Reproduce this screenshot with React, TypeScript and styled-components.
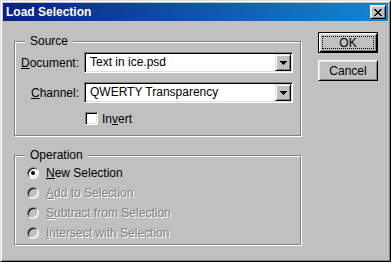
import styled, { createGlobalStyle } from "styled-components"

const GlobalStyle = createGlobalStyle`
  html, body { margin: 0; padding: 0; background: #c0c0c0; }
  body { font-family: "Liberation Sans", Arial, sans-serif; font-size: 12px; color: #000; }
`

const Window = styled.div`
  box-sizing: border-box; width: 391px; height: 262px;
  background: #c0c0c0; padding: 2px;
  border: 1px solid; border-color: #dfdfdf #000 #000 #dfdfdf;
  box-shadow: inset 1px 1px #fff, inset -1px -1px #808080;
  display: flex; flex-direction: column;
`

const TitleBar = styled.div`
  height: 18px; display: flex; align-items: center; justify-content: space-between;
  padding: 0 2px 0 3px;
  background: linear-gradient(90deg, #0a2084, #1288d2);
  color: #fff; font-weight: bold; font-size: 12px;
`

const CloseButton = styled.div`
  box-sizing: border-box; width: 16px; height: 14px;
  background: #c0c0c0; display: flex; align-items: center; justify-content: center;
  border: 1px solid; border-color: #fff #000 #000 #fff;
  box-shadow: inset 1px 1px #dfdfdf, inset -1px -1px #808080;
`

const Body = styled.div`
  display: flex; padding: 11px 0 0 11px;
`

const LeftColumn = styled.div`
  width: 287px; margin-top: 9px;
  display: flex; flex-direction: column; gap: 19px;
`

const Group = styled.div`
  border: 1px solid #808080;
  box-shadow: inset 1px 1px #fff, 1px 1px #fff;
  display: flex; flex-direction: column;
`

const Legend = styled.span`
  align-self: flex-start; margin: -8px 0 0 10px; padding: 0 5px;
  line-height: 14px; background: #c0c0c0;
`

const FormGrid = styled.div`
  display: grid; grid-template-columns: 58px 1fr;
  column-gap: 5px; row-gap: 9px; align-items: center;
  margin-top: 4px; padding: 0 7px 10px 6px;
`

const Label = styled.span`
  justify-self: end; white-space: nowrap;
`

const Combo = styled.div`
  box-sizing: border-box; height: 21px; padding: 1px;
  background: #fff; display: flex;
  border: 1px solid; border-color: #808080 #fff #fff #808080;
  box-shadow: inset 1px 1px #000, inset -1px -1px #dfdfdf;
`

const ComboText = styled.span`
  flex: 1; padding-left: 4px; line-height: 17px; white-space: nowrap;
`

const DropButton = styled.div`
  box-sizing: border-box; width: 16px; background: #c0c0c0;
  display: flex; align-items: center; justify-content: center;
  border: 1px solid; border-color: #dfdfdf #000 #000 #dfdfdf;
  box-shadow: inset 1px 1px #fff, inset -1px -1px #808080;
`

const CheckRow = styled.label`
  grid-column: 2; display: flex; align-items: center; gap: 4px;
  height: 13px; padding-left: 1px;
`

const CheckBox = styled.span`
  box-sizing: border-box; width: 13px; height: 13px; background: #fff;
  border: 1px solid; border-color: #808080 #fff #fff #808080;
  box-shadow: inset 1px 1px #000, inset -1px -1px #dfdfdf;
`

const RadioList = styled.div`
  display: flex; flex-direction: column;
  margin-top: 1px; padding: 0 0 1px 12px;
`

const RadioRow = styled.label<{ $disabled?: boolean }>`
  height: 20px; display: flex; align-items: center; gap: 7px;
  color: ${p => (p.$disabled ? "#808080" : "#000")};
  text-shadow: ${p => (p.$disabled ? "1px 1px 0 #fff" : "none")};
`

const RadioCircle = styled.span<{ $disabled?: boolean }>`
  box-sizing: border-box; width: 12px; height: 12px; border-radius: 50%;
  background: ${p => (p.$disabled ? "#c0c0c0" : "#fff")};
  border: 1px solid; border-color: #808080 #fff #fff #808080;
  box-shadow: inset 1px 1px #000, inset -1px -1px #dfdfdf;
  display: flex; align-items: center; justify-content: center;
`

const RadioDot = styled.span`
  width: 4px; height: 4px; border-radius: 50%; background: #000;
`

const RightColumn = styled.div`
  width: 60px; margin-left: 17px;
  display: flex; flex-direction: column; gap: 7px;
`

const Button = styled.button<{ $default?: boolean }>`
  box-sizing: border-box; width: 60px; height: 21px; padding: 3px;
  font: inherit; color: #000; background: #c0c0c0;
  display: flex; align-items: stretch; justify-content: center;
  border: 1px solid;
  border-color: ${p => (p.$default ? "#000" : "#fff #000 #000 #fff")};
  box-shadow: ${p =>
    p.$default
      ? "inset 1px 1px #fff, inset -1px -1px #000, inset 2px 2px #dfdfdf, inset -2px -2px #808080"
      : "inset 1px 1px #dfdfdf, inset -1px -1px #808080"};
`

const ButtonFace = styled.span<{ $focused?: boolean }>`
  flex: 1; display: flex; align-items: center; justify-content: center;
  border: 1px ${p => (p.$focused ? "dotted #000" : "solid transparent")};
`

const CloseGlyph = () => (
  <svg width="8" height="7" viewBox="0 0 8 7" shapeRendering="crispEdges">
    <path
      fill="#000"
      d="M0 0h2v1H0zM6 0h2v1H6zM1 1h2v1H1zM5 1h2v1H5zM2 2h4v1H2zM3 3h2v1H3zM2 4h4v1H2zM1 5h2v1H1zM5 5h2v1H5zM0 6h2v1H0zM6 6h2v1H6z"
    />
  </svg>
)

const Arrow = () => (
  <svg width="7" height="4" viewBox="0 0 7 4" shapeRendering="crispEdges">
    <path fill="#000" d="M0 0h7v1H0zM1 1h5v1H1zM2 2h3v1H2zM3 3h1v1H3z" />
  </svg>
)

const operations = [
  { key: "N", rest: "ew Selection", enabled: true },
  { key: "A", rest: "dd to Selection" },
  { key: "S", rest: "ubtract from Selection" },
  { key: "I", rest: "ntersect with Selection" },
]

const App = () => {
  return (
    <>
      <GlobalStyle />
      <Window>
        <TitleBar>
          <span>Load Selection</span>
          <CloseButton>
            <CloseGlyph />
          </CloseButton>
        </TitleBar>

        <Body>
          <LeftColumn>
            <Group>
              <Legend>Source</Legend>
              <FormGrid>
                <Label><u>D</u>ocument:</Label>
                <Combo>
                  <ComboText>Text in ice.psd</ComboText>
                  <DropButton><Arrow /></DropButton>
                </Combo>

                <Label><u>C</u>hannel:</Label>
                <Combo>
                  <ComboText>QWERTY Transparency</ComboText>
                  <DropButton><Arrow /></DropButton>
                </Combo>

                <CheckRow>
                  <CheckBox />
                  <span>In<u>v</u>ert</span>
                </CheckRow>
              </FormGrid>
            </Group>

            <Group>
              <Legend>Operation</Legend>
              <RadioList>
                {operations.map(op => (
                  <RadioRow key={op.key} $disabled={!op.enabled}>
                    <RadioCircle $disabled={!op.enabled}>
                      {op.enabled && <RadioDot />}
                    </RadioCircle>
                    <span><u>{op.key}</u>{op.rest}</span>
                  </RadioRow>
                ))}
              </RadioList>
            </Group>
          </LeftColumn>

          <RightColumn>
            <Button $default>
              <ButtonFace $focused>OK</ButtonFace>
            </Button>
            <Button>
              <ButtonFace>Cancel</ButtonFace>
            </Button>
          </RightColumn>
        </Body>
      </Window>
    </>
  )
}

export default App
